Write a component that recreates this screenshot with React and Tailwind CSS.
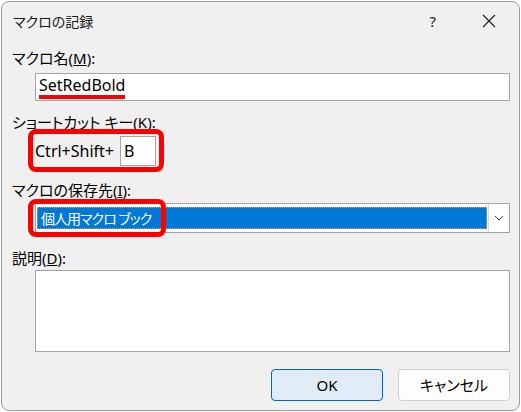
import { useState } from 'react';

const font = "font-['Noto_Sans','Noto_Sans_CJK_JP',sans-serif] [font-feature-settings:'palt']";

const Label = ({ children, className = '' }) => <div className={`h-[18px] text-[15px] leading-[18px] text-black ${className}`}>{children}</div>;

export default function App() {
  const [name, setName] = useState('SetRedBold');

  return <div className={`h-[412px] w-[521px] overflow-hidden bg-white ${font}`}>
    <div className="ml-px mt-px flex h-[410px] w-[519px] flex-col rounded-lg border border-[#9c9c9c] bg-[#f0f0f0]">
      <header className="flex h-[38px] shrink-0 items-center pl-[11px]">
        <span className="text-[14px] text-[#1b1b1b]">マクロの記録</span>
        <span className="ml-auto mr-[46px] text-[15px] text-[#1b1b1b]">?</span>
        <svg width="14" height="14" viewBox="0 0 14 14" className="mr-[23px]" stroke="#1b1b1b" strokeWidth="1.1"><path d="M1 1L13 13M13 1L1 13" /></svg>
      </header>

      <div className="flex flex-col pl-[10px] pr-[9px]">
        <Label className="mt-[9px]">マクロ名(<span className="underline">M</span>):</Label>
        <div className="ml-[23px] mt-[6px] flex h-[28px] items-center border border-[#a5a5a5] bg-white pl-[3px]">
          <span className="border-b-[4px] border-[#ff0000] text-[16px] leading-[19px] text-black">{name}</span>
        </div>

        <Label className="mt-[12px]">ショートカット キー(<span className="underline">K</span>):</Label>
        <div className="relative ml-[23px] mt-[5px] flex w-fit items-center gap-[6px]">
          <span className="text-[16px] text-black">Ctrl+Shift+</span>
          <div className="flex h-[30px] w-[36px] items-center border border-[#a5a5a5] bg-white pl-[3px] text-[16px] text-black">B</div>
          <div className="pointer-events-none absolute -bottom-[6px] -left-[7px] -right-[8px] -top-[7px] rounded-[8px] border-[5px] border-[#ff0000]" />
        </div>

        <Label className="mt-[15px]">マクロの保存先(<span className="underline">I</span>):</Label>
        <div className="relative ml-[23px] mt-[4px] flex h-[30px] border border-[#a5a5a5] bg-white">
          <div className="my-[3px] ml-px flex flex-1 items-center border border-dotted border-[#e0a040] bg-[#0078d7] pl-[3px] text-[14px] tracking-[-1px] text-white">個人用マクロ ブック</div>
          <div className="ml-px flex w-[21px] items-center justify-center border-l border-[#d9d9d9]">
            <svg width="10" height="6" viewBox="0 0 10 6" fill="none" stroke="#444" strokeWidth="1"><path d="M1 1l4 4 4-4" /></svg>
          </div>
          <div className="pointer-events-none absolute -bottom-[5px] -left-[8px] -top-[5px] w-[138px] rounded-[8px] border-[5px] border-[#ff0000]" />
        </div>

        <Label className="mt-[16px]">説明(<span className="underline">D</span>):</Label>
        <div className="ml-[23px] mt-[3px] h-[82px] border border-[#a5a5a5] bg-white" />

        <div className="mt-[17px] flex justify-end gap-[15px]">
          <button className="h-[32px] w-[112px] rounded-[4px] border border-[#0067c0] bg-[#e0edf8] text-[15px] text-black">OK</button>
          <button className="h-[32px] w-[112px] rounded-[4px] border border-[#d0d0d0] bg-[#fdfdfd] text-[15px] text-black">キャンセル</button>
        </div>
      </div>
    </div>
  </div>;
}
